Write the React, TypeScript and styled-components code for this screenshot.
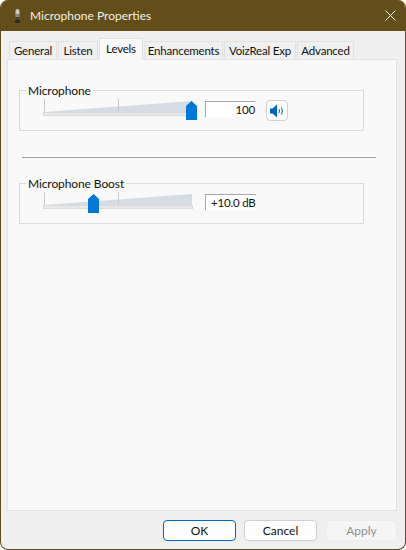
import React from "react";
import styled, { createGlobalStyle } from "styled-components";

const GlobalStyle = createGlobalStyle`
  html, body {
    margin: 0;
    padding: 0;
    background: #ffffff;
  }
  * {
    box-sizing: border-box;
  }
`;

const Window = styled.div`
  width: 406px;
  height: 550px;
  display: flex;
  flex-direction: column;
  overflow: hidden;
  background: #efefef;
  border: 1px solid #5f4d19;
  border-top: 0;
  border-radius: 8px;
  font-family: Lato, "Noto Sans", "Liberation Sans", sans-serif;
  font-size: 12px;
  color: #111111;
`;

const TitleBar = styled.div`
  flex: 0 0 31px;
  display: flex;
  align-items: center;
  gap: 7px;
  padding: 0 9px 0 12px;
  background: #614e19;
  color: #f4f1e8;
`;

const TitleText = styled.span`
  flex: 1;
  font-size: 12px;
`;

const Content = styled.div`
  flex: 1;
  display: flex;
  flex-direction: column;
  padding: 7px 8px 0 6px;
  min-height: 0;
`;

const TabStrip = styled.div`
  flex: 0 0 21px;
  display: flex;
  align-items: flex-end;
  padding-left: 2px;
`;

const Tab = styled.div<{ $active?: boolean; $width: number }>`
  position: relative;
  z-index: ${(p) => (p.$active ? 1 : 0)};
  width: ${(p) => p.$width}px;
  height: ${(p) => (p.$active ? 22 : 19)}px;
  margin-right: 1px;
  margin-bottom: -1px;
  display: flex;
  align-items: center;
  justify-content: center;
  padding-bottom: ${(p) => (p.$active ? 2 : 0)}px;
  background: ${(p) => (p.$active ? "#f9f9f9" : "#f0f0f0")};
  border: 1px solid #e2e2e2;
  border-bottom-color: ${(p) => (p.$active ? "#f9f9f9" : "#e2e2e2")};
  font-size: 11.5px;
  letter-spacing: -0.2px;
  white-space: nowrap;
`;

const Panel = styled.div`
  flex: 1;
  padding: 22px 32px 0 11px;
  background: #f9f9f9;
  border: 1px solid #e2e2e2;
  min-height: 0;
`;

const Group = styled.fieldset`
  width: 345px;
  height: 49px;
  margin: 0;
  padding: 0 0 0 23px;
  border: 1px solid #dadada;
  display: flex;
  align-items: flex-start;
`;

const GroupTitle = styled.legend`
  margin-left: -17px;
  padding: 1px 2px 0;
  height: 16px;
  line-height: 15px;
  font-size: 12px;
  letter-spacing: -0.1px;
`;

const Slider = styled.div`
  position: relative;
  flex: 0 0 162px;
  height: 24px;
  margin-top: 1px;
`;

const Thumb = styled.svg<{ $left: number }>`
  position: absolute;
  top: 2px;
  left: ${(p) => p.$left}px;
`;

const ValueBox = styled.div<{ $align: "left" | "right" }>`
  flex: 0 0 50px;
  height: 16px;
  margin-top: 3px;
  padding-left: ${(p) => (p.$align === "right" ? 0 : 5)}px;
  display: flex;
  align-items: center;
  justify-content: ${(p) => (p.$align === "right" ? "flex-end" : "flex-start")};
  background: #ffffff;
  border-top: 1px solid #a6a6a6;
  border-left: 1px solid #a6a6a6;
  font-size: 11.5px;
  letter-spacing: -0.2px;
  white-space: nowrap;
`;

const MuteButton = styled.div`
  flex: 0 0 22px;
  height: 21px;
  margin: 2px 0 0 11px;
  display: flex;
  align-items: center;
  justify-content: center;
  background: #fdfdfd;
  border: 1px solid #d0d0d0;
  border-radius: 4px;
`;

const Separator = styled.div`
  width: 354px;
  height: 1px;
  margin: 26px 0 17px 3px;
  background: #a2a2a2;
`;

const Footer = styled.div`
  flex: 0 0 38px;
  display: flex;
  justify-content: flex-end;
  gap: 8px;
  padding-top: 9px;
`;

const Button = styled.div<{ $kind?: "primary" | "disabled" }>`
  width: ${(p) => (p.$kind === "disabled" ? 71 : 73)}px;
  height: 21px;
  margin-left: ${(p) => (p.$kind === "disabled" ? 1 : 0)}px;
  display: flex;
  align-items: center;
  justify-content: center;
  border-radius: 4px;
  background: ${(p) => (p.$kind === "disabled" ? "#f5f5f5" : "#fdfdfd")};
  color: ${(p) => (p.$kind === "disabled" ? "#8f8f8f" : "#111111")};
  border: 1px solid
    ${(p) =>
      p.$kind === "primary"
        ? "#0067c0"
        : p.$kind === "disabled"
          ? "#ececec"
          : "#cfcfcf"};
`;

const tabs = [
  { label: "General", width: 48 },
  { label: "Listen", width: 40 },
  { label: "Levels", width: 44, active: true },
  { label: "Enhancements", width: 79 },
  { label: "VoizReal Exp", width: 72 },
  { label: "Advanced", width: 57 },
];

const MicIcon = () => (
  <svg width="10" height="16" viewBox="0 0 10 16">
    <rect x="2.5" y="1" width="4" height="7" rx="2" fill="#c9c9c2" />
    <rect x="2.5" y="6" width="4" height="3" fill="#8b8b85" />
    <rect x="3.5" y="9" width="2" height="3" fill="#3c3a33" />
    <rect x="2" y="12" width="5" height="3" rx="1" fill="#2b2a26" />
  </svg>
);

const CloseIcon = () => (
  <svg width="11" height="11" viewBox="0 0 11 11">
    <path d="M0.5 0.5 L10.5 10.5 M10.5 0.5 L0.5 10.5" stroke="#f4f1e8" strokeWidth="1" fill="none" />
  </svg>
);

const SpeakerIcon = () => (
  <svg width="16" height="14" viewBox="0 0 16 14">
    <path d="M1 4.5 H3.5 L8 0.5 V13.5 L3.5 9.5 H1 Z" fill="#0067c0" />
    <path d="M10 5 Q11 7 10 9" stroke="#0067c0" strokeWidth="1" fill="none" />
    <path d="M12.5 3.5 Q14.2 7 12.5 10.5" stroke="#0067c0" strokeWidth="1" fill="none" />
  </svg>
);

const SliderArt = () => (
  <svg width="162" height="24" viewBox="0 0 162 24">
    <path d="M1 13 L149 2 V13 Z" fill="#d5dce4" />
    <rect x="0.5" y="13.5" width="149" height="3" fill="#e8e8e8" stroke="#dadada" />
    <rect x="1" y="0" width="1" height="13" fill="#cacaca" />
    <rect x="75" y="0" width="1" height="13" fill="#cacaca" />
  </svg>
);

const ThumbArt = ({ left }: { left: number }) => (
  <Thumb $left={left} width="11" height="19" viewBox="0 0 11 19">
    <path d="M0 5 L5.5 0 L11 5 V19 H0 Z" fill="#0078d7" />
  </Thumb>
);

const App: React.FC = () => (
  <>
    <GlobalStyle />
    <Window>
      <TitleBar>
        <MicIcon />
        <TitleText>Microphone Properties</TitleText>
        <CloseIcon />
      </TitleBar>
      <Content>
        <TabStrip>
          {tabs.map((tab) => (
            <Tab key={tab.label} $active={tab.active} $width={tab.width}>
              {tab.label}
            </Tab>
          ))}
        </TabStrip>
        <Panel>
          <Group>
            <GroupTitle>Microphone</GroupTitle>
            <Slider>
              <SliderArt />
              <ThumbArt left={143} />
            </Slider>
            <ValueBox $align="right">100</ValueBox>
            <MuteButton>
              <SpeakerIcon />
            </MuteButton>
          </Group>
          <Separator />
          <Group>
            <GroupTitle>Microphone Boost</GroupTitle>
            <Slider>
              <SliderArt />
              <ThumbArt left={45} />
            </Slider>
            <ValueBox $align="left">+10.0 dB</ValueBox>
          </Group>
        </Panel>
        <Footer>
          <Button $kind="primary">OK</Button>
          <Button>Cancel</Button>
          <Button $kind="disabled">Apply</Button>
        </Footer>
      </Content>
    </Window>
  </>
);

export default App;
